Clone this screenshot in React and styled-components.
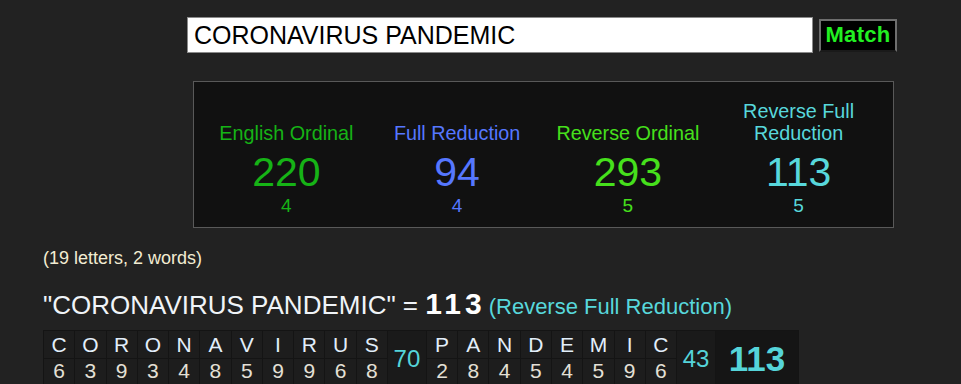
import React from 'react';
import styled, { createGlobalStyle } from 'styled-components';

const GlobalStyle = createGlobalStyle`
  body {
    margin: 0;
    background: #222222;
    font-family: "Liberation Sans", Arial, sans-serif;
  }
`

const ciphers = [
    { name: 'English Ordinal', value: 220, sub: 4, color: '#16b316' },
    { name: 'Full Reduction', value: 94, sub: 4, color: '#5677ff' },
    { name: 'Reverse Ordinal', value: 293, sub: 5, color: '#46e01c' },
    { name: 'Reverse Full Reduction', value: 113, sub: 5, color: '#58d8dc' },
]

const words = [
    { letters: 'CORONAVIRUS', values: [6, 3, 9, 3, 4, 8, 5, 9, 9, 6, 8], total: 70 },
    { letters: 'PANDEMIC', values: [2, 8, 4, 5, 4, 5, 9, 6], total: 43 },
]

const App = () => {
    return (
        <Page>
            <GlobalStyle />
            <SearchRow>
                <Search defaultValue="CORONAVIRUS PANDEMIC" />
                <MatchButton>Match</MatchButton>
            </SearchRow>

            <Panel>
                {ciphers.map(c => (
                    <Cipher key={c.name} color={c.color}>
                        <CipherName>{c.name}</CipherName>
                        <CipherValue>{c.value}</CipherValue>
                        <CipherSub>{c.sub}</CipherSub>
                    </Cipher>
                ))}
            </Panel>

            <Count>(19 letters, 2 words)</Count>

            <Heading>
                "CORONAVIRUS PANDEMIC" = <Total>113</Total><CipherTag>(Reverse Full Reduction)</CipherTag>
            </Heading>

            <Breakdown>
                <tbody>
                    <tr>
                        {words.map(w => (
                            <React.Fragment key={w.letters}>
                                {w.letters.split('').map((l, i) => (
                                    <Letter key={i}>{l}</Letter>
                                ))}
                                <WordSum rowSpan={2}>{w.total}</WordSum>
                            </React.Fragment>
                        ))}
                        <GrandSum rowSpan={2}>113</GrandSum>
                    </tr>
                    <tr>
                        {words.map(w =>
                            w.values.map((v, i) => (
                                <Digit key={w.letters + i}>{v}</Digit>
                            ))
                        )}
                    </tr>
                </tbody>
            </Breakdown>
        </Page>
    )
}

export default App

const Page = styled.div`
    padding: 17px 0 0 43px;
    height: 384px;
    box-sizing: border-box;
    overflow: hidden;
`

const SearchRow = styled.div`
    display: flex;
    align-items: center;
    gap: 6px;
    margin-left: 144px;
`

const Search = styled.input`
    width: 626px;
    height: 36px;
    box-sizing: border-box;
    border: 1px solid #8a8a8a;
    padding: 0 6px;
    font-family: "Liberation Sans", Arial, sans-serif;
    font-size: 25px;
    color: #000;
    background: #fff;
    outline: none;
`

const MatchButton = styled.button`
    width: 78px;
    height: 33px;
    box-sizing: border-box;
    background: #000;
    color: #22f022;
    border: 2px solid #6e6e6e;
    border-bottom-color: #1a1a1a;
    font-family: "Liberation Sans", Arial, sans-serif;
    font-weight: 700;
    font-size: 22px;
    letter-spacing: 0.3px;
    padding: 0;
    cursor: pointer;
`

const Panel = styled.div`
    margin: 28px 0 0 150px;
    width: 701px;
    height: 147px;
    box-sizing: border-box;
    background: #111111;
    border: 1px solid #595959;
    padding: 0 9px 10px 7px;
    display: flex;
    align-items: flex-end;
`

const Cipher = styled.div`
    width: 171px;
    display: flex;
    flex-direction: column;
    align-items: center;
    text-align: center;
    color: ${props => props.color};
`

const CipherName = styled.div`
    font-size: 19.8px;
    line-height: 22px;
    padding: 0 12px;
    margin-bottom: 5px;
`

const CipherValue = styled.div`
    font-size: 41px;
    line-height: 46px;
`

const CipherSub = styled.div`
    font-size: 19px;
    line-height: 22px;
`

const Count = styled.div`
    margin-top: 20px;
    font-size: 18px;
    line-height: 20px;
    color: #f2ecd2;
`

const Heading = styled.div`
    margin-top: 21px;
    font-size: 26px;
    line-height: 30px;
    color: #f0f4f8;
    white-space: nowrap;
`

const Total = styled.span`
    font-weight: 700;
    font-size: 30px;
    letter-spacing: 4px;
    margin-right: 3px;
    color: #fff;
`

const CipherTag = styled.span`
    font-size: 22px;
    color: #58d8dc;
`

const Breakdown = styled.table`
    margin-top: 8px;
    border-collapse: collapse;
    background: #161616;
`

const Letter = styled.td`
    width: 30.27px;
    height: 27px;
    padding: 0;
    text-align: center;
    font-size: 21px;
    line-height: 24px;
    color: #e2eefa;
    background: #1d1d1d;
    border: 1px solid #141414;
`

const Digit = styled(Letter)`
    color: #e4e0d6;
    vertical-align: top;
`

const WordSum = styled.td`
    width: 38px;
    padding: 0;
    text-align: center;
    font-size: 24px;
    color: #55d4d9;
    background: #1a1a1a;
    border: 1px solid #141414;
`

const GrandSum = styled.td`
    width: 82px;
    padding: 0;
    text-align: center;
    font-size: 35px;
    font-weight: 700;
    color: #55d4d9;
    background: #151515;
    border: 1px solid #141414;
`
